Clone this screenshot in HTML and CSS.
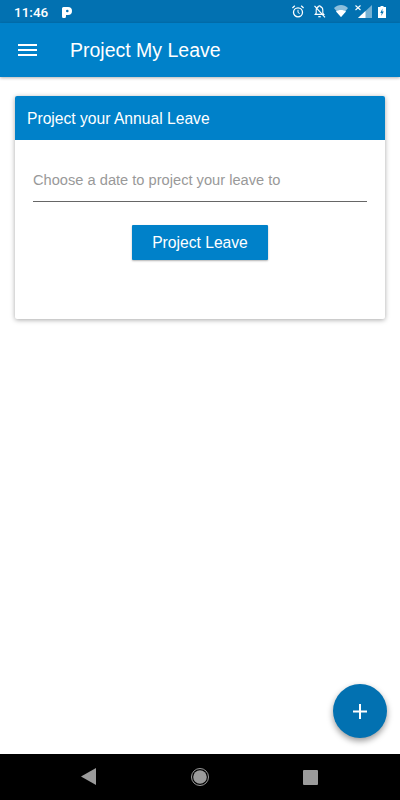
FILE: index.html
```html
<!DOCTYPE html>
<html lang="en">
<head>
  <meta charset="UTF-8">
  <title>Project My Leave</title>
  <link rel="stylesheet" href="styles.css">
</head>
<body>
  <div class="phone">

    <!-- Status bar -->
    <div class="status-bar">
      <span class="clock">11:46</span>
      <svg class="p-icon" width="10" height="11" viewBox="0 0 10 11">
        <path d="M0 1.500A1.500 1.500 0 0 1 1.500 0H6a4 4 0 0 1 0 8H4v1.300a1.700 1.700 0 0 1-4 0z" fill="#fff"/>
        <circle cx="5.300" cy="4" r="1.300" fill="#0271b1"/>
      </svg>
      <div class="status-icons">
        <svg class="icon-alarm" width="12" height="13" viewBox="0 0 12 13" fill="none" stroke="#fff">
          <circle cx="6" cy="7.300" r="4.500" stroke-width="1.300"/>
          <path d="M6 4.800v2.700l1.700 1" stroke-width="1"/>
          <path d="M.4 3 2.800.8M11.600 3 9.200.8" stroke-width="1.300"/>
        </svg>
        <svg class="icon-bell" width="13" height="13" viewBox="0 0 13 13" fill="none" stroke="#fff">
          <path d="M6.500.8a.9.900 0 0 1 .9.800c1.700.5 2.400 1.900 2.400 3.500v3l1 1.300H2.200l1-1.300v-3c0-1.600.7-3 2.400-3.500a.9.900 0 0 1 .9-.8z" stroke-width="1.100"/>
          <path d="M5.300 11.700h2.400" stroke-width="1.300"/>
          <path d="M1.500.8 12 12.400" stroke-width="1.200"/>
        </svg>
        <svg class="icon-wifi" width="14" height="12" viewBox="0 0 14 12">
          <path d="M0 3C4-1 10-1 14 3L7 12z" fill="#fff" fill-opacity=".55"/>
          <path d="M2 6.500C5 4.500 9 4.500 12 6.500L7 12z" fill="#fff"/>
        </svg>
        <svg class="icon-signal" width="17" height="13" viewBox="0 0 17 13">
          <path d="M3 13 17 0V13z" fill="#fff" fill-opacity=".45"/>
          <path d="M3 13 10.500 6V13z" fill="#fff"/>
          <path d="M.5.500l5 4.500M5.500.500l-5 4.500" stroke="#fff" stroke-width="1.100" fill="none"/>
        </svg>
        <svg class="icon-battery" width="8" height="12" viewBox="0 0 8 12">
          <path d="M2.500 0h3v1H8v11H0V1h2.500z" fill="#fff"/>
          <path d="M4.500 2.500 2.300 7h1.400L3.200 10 5.800 5.500H4.200z" fill="#0271b1"/>
        </svg>
      </div>
    </div>

    <!-- Header -->
    <header class="app-bar">
      <svg class="menu-icon" width="19" height="12" viewBox="0 0 19 12" fill="#fff">
        <rect x="0" y="0" width="19" height="2"/>
        <rect x="0" y="5" width="19" height="2"/>
        <rect x="0" y="10" width="19" height="2"/>
      </svg>
      <h1 class="app-title">Project My Leave</h1>
    </header>

    <!-- Content -->
    <main class="content">
      <section class="card">
        <h2 class="card-title">Project your Annual Leave</h2>
        <div class="card-body">
          <div class="date-field">Choose a date to project your leave to</div>
          <button class="project-btn">Project Leave</button>
        </div>
      </section>
    </main>

    <button class="fab">
      <svg width="14" height="15" viewBox="0 0 14 15" fill="#fff">
        <rect x="0" y="6.500" width="14" height="2"/>
        <rect x="6" y="0" width="2" height="15"/>
      </svg>
    </button>

    <!-- Android navigation -->
    <nav class="nav-bar">
      <svg class="nav-back" width="15" height="17" viewBox="0 0 15 17"><path d="M15 0v17L0 8.500z" fill="#9b9b9b"/></svg>
      <svg class="nav-home" width="18" height="18" viewBox="0 0 18 18">
        <circle cx="9" cy="9" r="8.500" fill="none" stroke="#9b9b9b"/>
        <circle cx="9" cy="9" r="6.800" fill="#9b9b9b"/>
      </svg>
      <div class="nav-square"></div>
    </nav>
  </div>
</body>
</html>
```

FILE: styles.css
```css
/* Base */
html, body {
  margin: 0;
  padding: 0;
}

body {
  font-family: "Liberation Sans", Arial, sans-serif;
  background: #fff;
}

.phone {
  position: relative;
  width: 400px;
  height: 800px;
  display: flex;
  flex-direction: column;
  overflow: hidden;
}

/* Status bar */
.status-bar {
  height: 23px;
  background: #0271b1;
  color: #fff;
  display: flex;
  align-items: center;
  padding: 0 14px;
  flex-shrink: 0;
}

.clock {
  font-family: Roboto, sans-serif;
  font-size: 13.5px;
  font-weight: 500;
}

.p-icon {
  margin-left: 14px;
  margin-top: 1px;
}

.status-icons {
  margin-left: auto;
  align-self: stretch;
  padding-top: 5px;
  display: flex;
  align-items: flex-start;
}

.icon-bell {
  margin-left: 9px;
}

.icon-wifi {
  margin-left: 8px;
}

.icon-signal {
  margin-left: 7px;
}

.icon-battery {
  margin-left: 6px;
  margin-top: 1px;
}

/* Header */
.app-bar {
  height: 54px;
  background: #0081c9;
  display: flex;
  align-items: center;
  flex-shrink: 0;
  box-shadow: 0 1px 3px rgba(0, 0, 0, 0.3);
}

.menu-icon {
  margin-left: 18px;
}

.app-title {
  margin: 0 0 0 33px;
  font-size: 19.5px;
  font-weight: 400;
  color: #fff;
}

/* Card */
.content {
  flex: 1;
  padding: 19px 15px 0;
}

.card {
  height: 223px;
  border-radius: 2px;
  background: #fff;
  box-shadow: 0 1px 5px rgba(0, 0, 0, 0.35);
  overflow: hidden;
}

.card-title {
  margin: 0;
  height: 44px;
  padding-left: 12px;
  line-height: 45px;
  background: #0081c9;
  color: #fff;
  font-size: 15.65px;
  font-weight: 400;
}

.card-body {
  padding: 0 18px;
  display: flex;
  flex-direction: column;
  align-items: center;
}

.date-field {
  align-self: stretch;
  height: 62px;
  line-height: 80px;
  box-sizing: border-box;
  border-bottom: 1px solid #666;
  color: #999;
  font-size: 14.65px;
  margin-bottom: 23px;
}

.project-btn {
  width: 136px;
  height: 35px;
  padding: 0;
  border: 0;
  border-radius: 1px;
  background: #0081c9;
  color: #fff;
  font-family: inherit;
  font-size: 15.65px;
  box-shadow: 0 1px 2px rgba(0, 0, 0, 0.3);
}

/* Floating button */
.fab {
  position: absolute;
  left: 333px;
  top: 684px;
  width: 54px;
  height: 54px;
  padding: 0;
  border: 0;
  border-radius: 50%;
  background: #0271b1;
  display: flex;
  align-items: center;
  justify-content: center;
  box-shadow: 0 3px 6px rgba(0, 0, 0, 0.4);
}

/* Android navigation */
.nav-bar {
  height: 46px;
  background: #000;
  flex-shrink: 0;
  display: flex;
  align-items: center;
  padding-left: 81px;
}

.nav-back {
  margin-top: -1px;
}

.nav-home {
  margin: 0 94px 0 95px;
}

.nav-square {
  width: 15px;
  height: 15px;
  border-radius: 1px;
  background: #9b9b9b;
}
```
